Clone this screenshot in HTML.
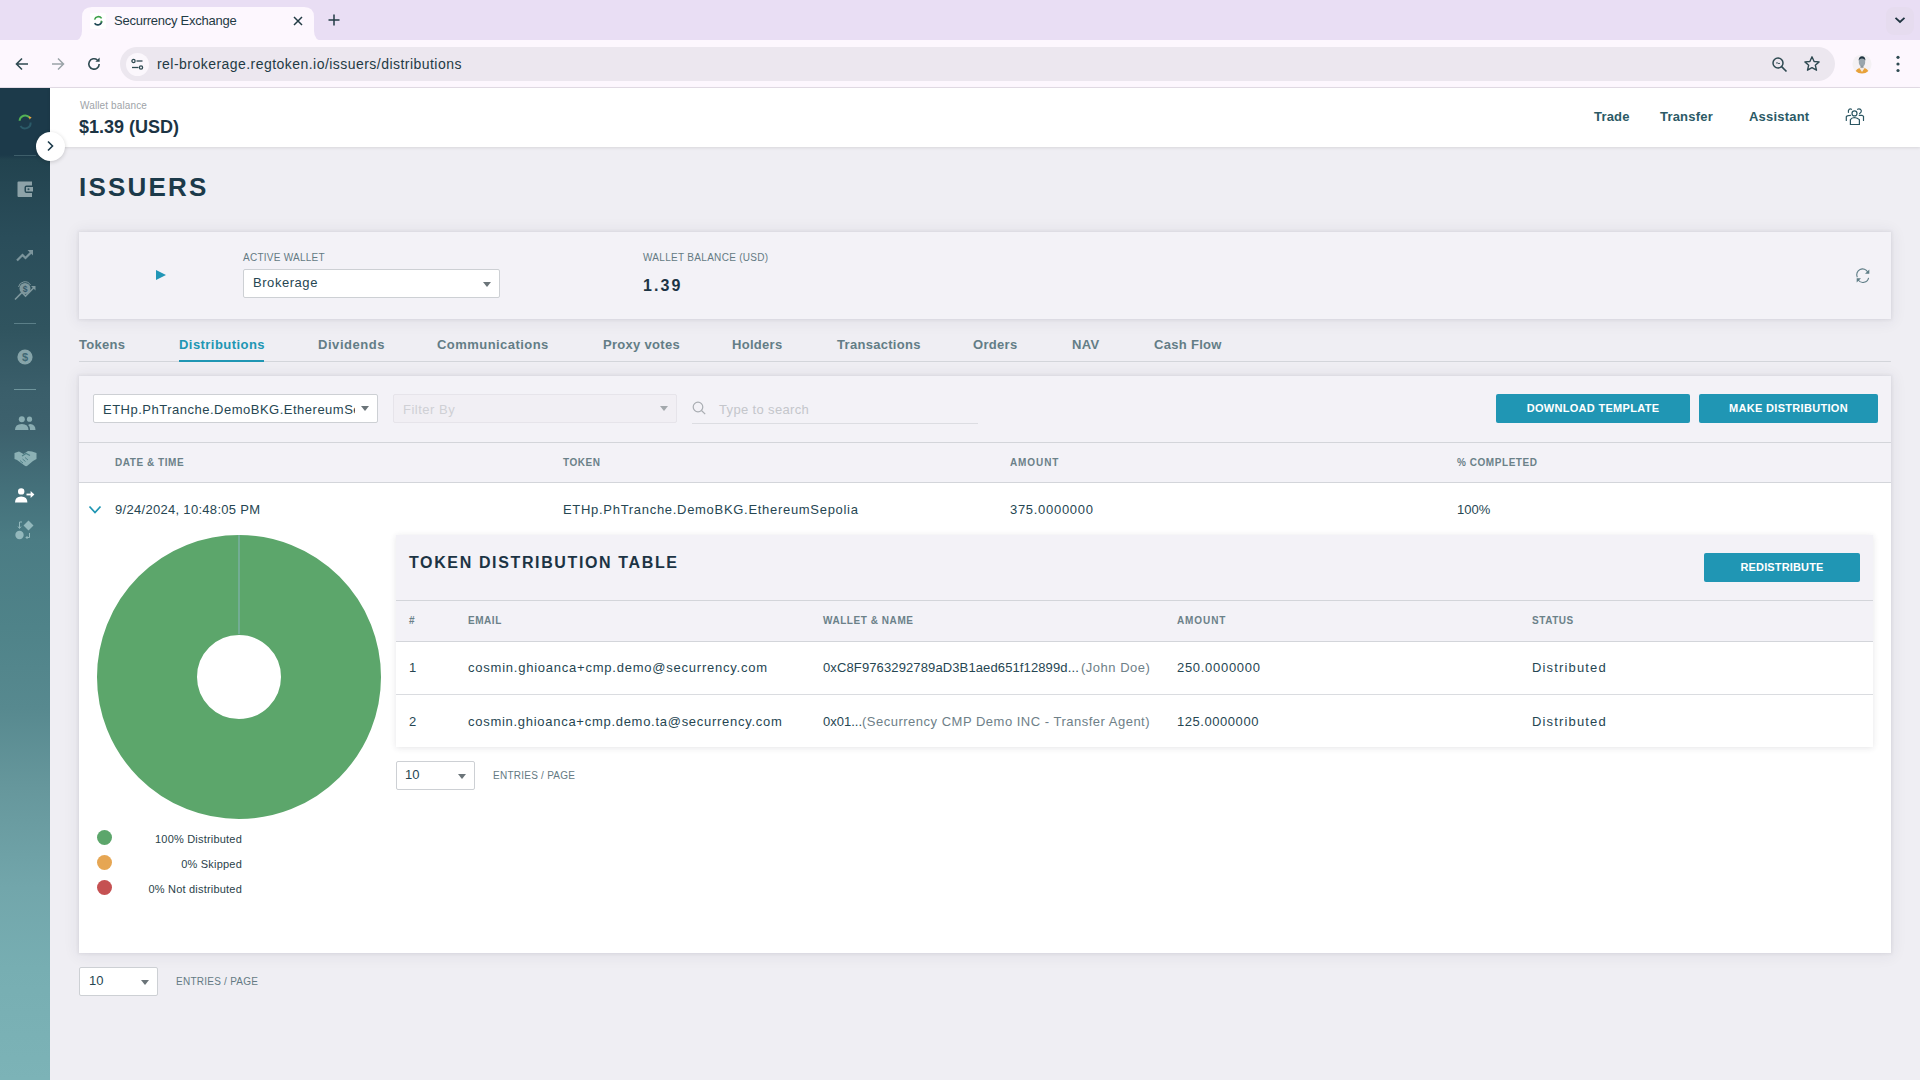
<!DOCTYPE html>
<html><head><meta charset="utf-8">
<style>
*{margin:0;padding:0;box-sizing:border-box}
html,body{width:1920px;height:1080px;overflow:hidden;font-family:"Liberation Sans",sans-serif;background:#efeef3;position:relative}
.a{position:absolute;white-space:nowrap}
svg.a{overflow:visible}
.chromet{color:#1f3a44;font-size:13px}
.navl{color:#2b5a66;font-size:13px;font-weight:bold;top:109px;letter-spacing:0.2px}
.card{background:#f3f2f7;box-shadow:0 0 3px 1px rgba(40,40,70,.07),0 1px 14px 2px rgba(40,40,70,.07)}
.lbl{color:#647a83;font-size:10px;letter-spacing:0.25px}
.tabs{top:337px;font-size:13px;font-weight:bold;color:#637d86;letter-spacing:0.3px}
.btn{background:#2096b4;color:#fff;font-size:11px;font-weight:bold;text-align:center;border-radius:2px;letter-spacing:0.3px}
.th{color:#6b8189;font-size:10px;font-weight:bold;letter-spacing:0.55px}
.td{color:#264652;font-size:13px;letter-spacing:0.7px}
.sel{background:#fff;border:1px solid #cdd0d4;border-radius:2px}
.caret{width:0;height:0;border-left:4px solid transparent;border-right:4px solid transparent;border-top:5px solid #6b7479}
.leg{color:#2a3f4a;font-size:11px;text-align:right;letter-spacing:0.2px}
.hl{height:1px;background:#d3d5da}
</style></head>
<body>
<!-- ============ CHROME ============ -->
<div class="a" style="left:0;top:0;width:1920px;height:41px;background:#e9def4"></div>
<svg class="a" style="left:72px;top:7px" width="252" height="34" viewBox="0 0 252 34"><path d="M0 34 Q10 34 10 24 L10 10 Q10 0 20 0 L232 0 Q242 0 242 10 L242 24 Q242 34 252 34 Z" fill="#fdf7fe"/></svg>
<div class="a" style="left:0;top:40px;width:1920px;height:47px;background:#fdf7fe"></div>
<div class="a" style="left:0;top:87px;width:1920px;height:1px;background:#e4dde7"></div>
<div class="a" style="left:120px;top:47px;width:1715px;height:34px;background:#ece7ef;border-radius:17px"></div>
<!-- favicon -->
<div class="a" style="left:90px;top:13px;width:16px;height:16px;background:#fff;border-radius:2px"></div>
<svg class="a" style="left:90px;top:13px" width="16" height="16" viewBox="0 0 16 16"><path d="M4.6 6.6 A3.9 3.9 0 0 1 11.6 5.4" fill="none" stroke="#3fa14a" stroke-width="1.6"/><path d="M11.7 8.2 A3.9 3.9 0 0 1 4.6 10.2" fill="none" stroke="#1f4a55" stroke-width="1.6"/><path d="M11 7 L12.6 9.3 L10.3 9.6Z" fill="#3fa14a"/></svg>
<div class="a chromet" style="left:114px;top:13px;letter-spacing:-0.25px">Securrency Exchange</div>
<svg class="a" style="left:292px;top:15px" width="12" height="12" viewBox="0 0 12 12"><path d="M2 2 L10 10 M10 2 L2 10" stroke="#223b44" stroke-width="1.5"/></svg>
<svg class="a" style="left:328px;top:14px" width="12" height="12" viewBox="0 0 12 12"><path d="M6 0.5 V11.5 M0.5 6 H11.5" stroke="#223b44" stroke-width="1.5"/></svg>
<div class="a" style="left:1886px;top:7px;width:28px;height:28px;background:#e6dcef;border-radius:8px"></div>
<svg class="a" style="left:1894px;top:16px" width="12" height="8" viewBox="0 0 12 8"><path d="M1.5 1.8 L6 6 L10.5 1.8" fill="none" stroke="#1f3440" stroke-width="1.8"/></svg>
<!-- nav -->
<svg class="a" style="left:14px;top:56px" width="16" height="16" viewBox="0 0 16 16"><path d="M14 8 H3 M8 2.5 L2.5 8 L8 13.5" fill="none" stroke="#2f4a52" stroke-width="1.6"/></svg>
<svg class="a" style="left:50px;top:56px" width="16" height="16" viewBox="0 0 16 16"><path d="M2 8 H13 M8 2.5 L13.5 8 L8 13.5" fill="none" stroke="#9aa3a8" stroke-width="1.5"/></svg>
<svg class="a" style="left:86px;top:56px" width="16" height="16" viewBox="0 0 16 16"><path d="M13.2 8 A5.2 5.2 0 1 1 11.4 4" fill="none" stroke="#2f4a52" stroke-width="1.6"/><path d="M13.6 1.6 V5.8 H9.4Z" fill="#2f4a52"/></svg>
<div class="a" style="left:126px;top:53px;width:23px;height:23px;border-radius:50%;background:#fbf7fc"></div>
<svg class="a" style="left:129px;top:56px" width="17" height="17" viewBox="0 0 17 17"><circle cx="4.5" cy="5" r="1.6" fill="none" stroke="#2f4a52" stroke-width="1.3"/><path d="M7.5 5 H13.5" stroke="#2f4a52" stroke-width="1.3"/><circle cx="12" cy="11.5" r="1.6" fill="none" stroke="#2f4a52" stroke-width="1.3"/><path d="M3 11.5 H9.5" stroke="#2f4a52" stroke-width="1.3"/></svg>
<div class="a chromet" style="left:157px;top:56px;font-size:14px;letter-spacing:0.46px">rel-brokerage.regtoken.io/issuers/distributions</div>
<svg class="a" style="left:1771px;top:56px" width="18" height="18" viewBox="0 0 18 18"><circle cx="7" cy="7" r="5" fill="none" stroke="#2f4a52" stroke-width="1.5"/><path d="M10.6 10.6 L15.5 15.5" stroke="#2f4a52" stroke-width="1.7"/><path d="M5 7.2 Q6 6.2 7 7.2 T9 7.2" fill="none" stroke="#2f4a52" stroke-width="0.9"/></svg>
<svg class="a" style="left:1803px;top:55px" width="18" height="18" viewBox="0 0 18 18"><path d="M9 1.8 L11.1 6.5 L16.1 6.9 L12.3 10.2 L13.5 15.2 L9 12.6 L4.5 15.2 L5.7 10.2 L1.9 6.9 L6.9 6.5Z" fill="none" stroke="#2f4a52" stroke-width="1.4" stroke-linejoin="round"/></svg>
<svg class="a" style="left:1852px;top:54px" width="20" height="20" viewBox="0 0 20 20"><defs><clipPath id="av"><circle cx="10" cy="10" r="9.6"/></clipPath></defs><circle cx="10" cy="10" r="9.6" fill="#f4f1f4"/><g clip-path="url(#av)"><path d="M2.5 20 Q4 13.5 10 13.5 Q16 13.5 17.5 20Z" fill="#e8a23a"/><path d="M7 13.5 L10 18 L13 13.5Z" fill="#f1e9e3"/><ellipse cx="10" cy="8" rx="3.2" ry="4.2" fill="#9aa6ad"/><path d="M6.5 6.5 Q7 2.2 10 2.2 Q13.2 2.2 13.5 6.5 Q12 4.5 10 4.6 Q8 4.5 6.5 6.5Z" fill="#1f3440"/><path d="M8.5 11.5 V13.8 H11.5 V11.5Z" fill="#8b969c"/></g></svg>
<svg class="a" style="left:1894px;top:54px" width="8" height="20" viewBox="0 0 8 20"><circle cx="4" cy="3.3" r="1.6" fill="#2f4a52"/><circle cx="4" cy="10" r="1.6" fill="#2f4a52"/><circle cx="4" cy="16.5" r="1.6" fill="#2f4a52"/></svg>

<!-- ============ SIDEBAR ============ -->
<div class="a" style="left:0;top:88px;width:50px;height:992px;background:linear-gradient(180deg,#1c3a4a 0px,#1c3a4a 67px,#22434f 72px,#2a4d5a 150px,#30545f 240px,#3a5e6a 300px,#3d616d 340px,#44707a 400px,#4b7c84 452px,#4f8389 540px,#57898f 620px,#66979c 700px,#72a6ab 800px,#77aeb2 880px,#7cb3b7 992px)"></div>
<div class="a" style="left:14px;top:155px;width:22px;height:1px;background:#3e5e6a"></div>
<div class="a" style="left:14px;top:323px;width:22px;height:1px;background:#5b7f88"></div>
<div class="a" style="left:14px;top:389px;width:22px;height:1px;background:#6f959c"></div>
<!-- logo -->
<svg class="a" style="left:16px;top:113px" width="18" height="18" viewBox="0 0 18 18"><path d="M3.6 7.8 A5.6 5.6 0 0 1 13.6 4.6" fill="none" stroke="#53b255" stroke-width="2"/><path d="M12.6 3.2 L15.6 4.2 L13.6 6.6Z" fill="#e8a33c"/><path d="M14.6 9.5 A5.6 5.6 0 0 1 4.4 13" fill="none" stroke="#2b5a68" stroke-width="2"/></svg>
<!-- wallet -->
<svg class="a" style="left:17px;top:181px" width="17" height="17" viewBox="0 0 17 17"><path d="M1.5 0.5 H15 V4.5 H9.5 Q7.5 4.5 7.5 6.5 V10 Q7.5 12 9.5 12 H15 V16 H1.5 Q0.5 16 0.5 15 V1.5 Q0.5 0.5 1.5 0.5Z" fill="#8da2a8"/><rect x="9" y="6" width="7" height="4.5" fill="#8da2a8"/><circle cx="11.5" cy="8.2" r="1" fill="#2b4e5b"/></svg>
<!-- trend -->
<svg class="a" style="left:16px;top:249px" width="18" height="13" viewBox="0 0 18 13"><path d="M1 11.5 L6.5 6 L9.5 9 L16 2.5" fill="none" stroke="#7c959c" stroke-width="2.2"/><path d="M11.5 1 H17 V6.5Z" fill="#7c959c"/></svg>
<!-- dollar arrow -->
<svg class="a" style="left:14px;top:281px" width="23" height="20" viewBox="0 0 23 20"><circle cx="11" cy="7.5" r="5.5" fill="#7f989e"/><text x="11" y="10.6" font-size="8.5" font-weight="bold" text-anchor="middle" fill="#36596a" font-family="Liberation Sans">$</text><path d="M1 18.5 L8 11.5 L11.5 15 L20 6.5" fill="none" stroke="#7f989e" stroke-width="1.6"/><path d="M17 5 H21.5 V9.5Z" fill="#7f989e"/><path d="M4.5 6 A6.5 6.5 0 0 1 16.5 4" fill="none" stroke="#7f989e" stroke-width="1"/></svg>
<!-- coin -->
<svg class="a" style="left:17px;top:349px" width="16" height="16" viewBox="0 0 16 16"><circle cx="8" cy="8" r="7.6" fill="#86a4a9"/><text x="8" y="12" font-size="11" font-weight="bold" text-anchor="middle" fill="#406874" font-family="Liberation Sans">$</text></svg>
<!-- people -->
<svg class="a" style="left:15px;top:416px" width="21" height="15" viewBox="0 0 21 15"><circle cx="6.8" cy="3.2" r="3" fill="#8aadb2"/><path d="M0 14 Q0 8 6.8 8 Q13.5 8 13.5 14Z" fill="#8aadb2"/><circle cx="14.5" cy="3.2" r="2.6" fill="#8aadb2"/><path d="M15 8 Q20.5 8.5 20.5 14 H15 Q15 10 13 9Z" fill="#8aadb2"/></svg>
<!-- handshake -->
<svg class="a" style="left:14px;top:450px" width="23" height="17" viewBox="0 0 23 17"><path d="M0.5 3 L5 1.5 L9.5 4 L14 1 L18 1.5 L22.5 3 V9 L19 11 L13 16 Q11.5 16.5 10.5 15.5 L3 10 L0.5 9Z" fill="#8cb1b5"/><path d="M8 6 L12 3.5 L16 5.5" fill="none" stroke="#4d7d84" stroke-width="1.1"/><path d="M6 10.5 L9 13 M8.5 9 L11.5 11.5 M11 7.5 L14 10" stroke="#4d7d84" stroke-width="0.9"/></svg>
<!-- person arrow (active) -->
<svg class="a" style="left:15px;top:488px" width="20" height="15" viewBox="0 0 20 15"><circle cx="6.2" cy="3.4" r="3.2" fill="#fff"/><path d="M0 14.5 Q0 8.5 6.2 8.5 Q12.4 8.5 12.4 14.5Z" fill="#fff"/><path d="M11.5 6.5 H17" stroke="#fff" stroke-width="1.8"/><path d="M15.6 3 L19.4 6.5 L15.6 10Z" fill="#fff"/></svg>
<!-- last icon -->
<svg class="a" style="left:15px;top:520px" width="19" height="20" viewBox="0 0 19 20"><circle cx="4.5" cy="15" r="4.2" fill="#93b8bc"/><path d="M13.5 0.5 L18.5 5.5 L13.5 10.5 L8.5 5.5Z" fill="#93b8bc"/><path d="M4.5 2 H7 M4.5 2 V8 M3 6.5 L4.5 8.5 L6 6.5" fill="none" stroke="#93b8bc" stroke-width="1"/><path d="M14.5 13 V17.5 H11 M12.5 16 L11 17.5 L12.5 19" fill="none" stroke="#93b8bc" stroke-width="1"/></svg>

<!-- ============ HEADER ============ -->
<div class="a" style="left:50px;top:88px;width:1870px;height:59px;background:#fff;box-shadow:0 1px 3px rgba(0,0,0,.10)"></div>
<div class="a" style="left:80px;top:100px;font-size:10px;color:#9ea3a8;letter-spacing:0.13px">Wallet balance</div>
<div class="a" style="left:79px;top:117px;font-size:18px;font-weight:bold;color:#1c3444">$1.39 (USD)</div>
<div class="a navl" style="left:1594px">Trade</div>
<div class="a navl" style="left:1660px">Transfer</div>
<div class="a navl" style="left:1749px">Assistant</div>
<svg class="a" style="left:1840px;top:100px" width="35" height="32" viewBox="0 0 35 32"><g fill="none" stroke="#2b5662" stroke-width="1.2" stroke-linecap="round"><circle cx="14.5" cy="13.4" r="2.5"/><path d="M10.4 24.5 V19.6 Q11.5 17.8 14.5 17.5 Q17.5 17.8 19.4 19.6 V24.5 Z"/><path d="M11.5 9.3 Q10.2 8.6 9.3 9.2 Q8 10.3 8.4 12.3 M6.3 20.5 V16.7 Q6.8 15.3 10.6 15.3"/><path d="M17.6 9.3 Q19 8.6 20.6 9.4 Q21.9 10.6 21 12.2 L19.6 13.6 M19.2 15.3 H22 L23.5 16.3 V20.5"/></g></svg>

<!-- expand btn -->
<div class="a" style="left:36px;top:132px;width:29px;height:29px;border-radius:50%;background:#fff;box-shadow:0 1px 4px rgba(0,0,0,.18)"></div>
<svg class="a" style="left:45px;top:140px" width="10" height="12" viewBox="0 0 10 12"><path d="M3 1.5 L7.5 6 L3 10.5" fill="none" stroke="#1c3a4a" stroke-width="1.6"/></svg>
<!-- ============ MAIN ============ -->
<div class="a" style="left:79px;top:172px;font-size:26px;font-weight:bold;color:#1c3a4a;letter-spacing:2.2px">ISSUERS</div>

<div class="a card" style="left:79px;top:232px;width:1812px;height:87px"></div>
<svg class="a" style="left:155px;top:269px" width="12" height="12" viewBox="0 0 12 12"><path d="M1 1 L11 6 L1 11Z" fill="#2196b6"/></svg>
<div class="a lbl" style="left:243px;top:252px">ACTIVE WALLET</div>
<div class="a sel" style="left:243px;top:269px;width:257px;height:29px"></div>
<div class="a td" style="left:253px;top:275px;letter-spacing:0.55px">Brokerage</div>
<div class="a caret" style="left:483px;top:282px"></div>
<div class="a lbl" style="left:643px;top:252px;letter-spacing:0.3px">WALLET BALANCE (USD)</div>
<div class="a" style="left:643px;top:277px;font-size:16px;font-weight:bold;color:#1c3444;letter-spacing:2.1px">1.39</div>
<svg class="a" style="left:1855px;top:268px" width="16" height="16" viewBox="0 0 16 16"><path d="M2.3 9.2 A5.8 5.8 0 0 1 12.8 4.2" fill="none" stroke="#5e7d86" stroke-width="1.1"/><path d="M13.6 9.8 A5.8 5.8 0 0 1 3.2 12" fill="none" stroke="#5e7d86" stroke-width="1.1"/><path d="M14.3 1.5 V5.8 H10Z" fill="#5e7d86"/><path d="M1.7 14.5 V10.2 H6Z" fill="#5e7d86"/></svg>

<div class="a tabs" style="left:79px">Tokens</div>
<div class="a tabs" style="left:179px;color:#2096b3;letter-spacing:0.45px">Distributions</div>
<div class="a tabs" style="left:318px;letter-spacing:0.55px">Dividends</div>
<div class="a tabs" style="left:437px;letter-spacing:0.45px">Communications</div>
<div class="a tabs" style="left:603px">Proxy votes</div>
<div class="a tabs" style="left:732px">Holders</div>
<div class="a tabs" style="left:837px">Transactions</div>
<div class="a tabs" style="left:973px">Orders</div>
<div class="a tabs" style="left:1072px">NAV</div>
<div class="a tabs" style="left:1154px">Cash Flow</div>
<div class="a hl" style="left:79px;top:361px;width:1812px"></div>
<div class="a" style="left:179px;top:360px;width:85px;height:2px;background:#2096b3"></div>

<!-- big card -->
<div class="a card" style="left:79px;top:376px;width:1812px;height:577px;background:#fff"></div>
<div class="a" style="left:79px;top:376px;width:1812px;height:106px;background:#f3f2f7"></div>
<div class="a hl" style="left:79px;top:442px;width:1812px"></div>
<div class="a hl" style="left:79px;top:482px;width:1812px"></div>

<div class="a sel" style="left:93px;top:394px;width:285px;height:29px"></div>
<div class="a td" style="left:103px;top:402px;width:252px;overflow:hidden;letter-spacing:0.5px">ETHp.PhTranche.DemoBKG.EthereumSepolia</div>
<div class="a caret" style="left:361px;top:406px"></div>
<div class="a" style="left:393px;top:394px;width:284px;height:29px;background:#f1eff4;border:1px solid #e6e4ea;border-radius:2px"></div>
<div class="a td" style="left:403px;top:402px;color:#cfd0d5;letter-spacing:0.5px">Filter By</div>
<div class="a caret" style="left:660px;top:406px;border-top-color:#a3a8ac"></div>
<svg class="a" style="left:692px;top:401px" width="15" height="15" viewBox="0 0 15 15"><circle cx="6" cy="6" r="4.8" fill="none" stroke="#a9adb2" stroke-width="1.2"/><line x1="9.5" y1="9.5" x2="13.2" y2="13.2" stroke="#a9adb2" stroke-width="1.2"/></svg>
<div class="a td" style="left:719px;top:402px;color:#c4c6cb;letter-spacing:0.35px">Type to search</div>
<div class="a" style="left:692px;top:423px;width:286px;height:1px;background:#dcdde2"></div>

<div class="a btn" style="left:1496px;top:394px;width:194px;height:29px;line-height:29px">DOWNLOAD TEMPLATE</div>
<div class="a btn" style="left:1699px;top:394px;width:179px;height:29px;line-height:29px">MAKE DISTRIBUTION</div>

<div class="a th" style="left:115px;top:457px">DATE &amp; TIME</div>
<div class="a th" style="left:563px;top:457px">TOKEN</div>
<div class="a th" style="left:1010px;top:457px;letter-spacing:0.9px">AMOUNT</div>
<div class="a th" style="left:1457px;top:457px">% COMPLETED</div>

<svg class="a" style="left:88px;top:504px" width="14" height="12" viewBox="0 0 14 12"><polyline points="1.5,2.5 7,8.5 12.5,2.5" fill="none" stroke="#2096b3" stroke-width="1.7"/></svg>
<div class="a td" style="left:115px;top:502px;letter-spacing:0.3px">9/24/2024, 10:48:05 PM</div>
<div class="a td" style="left:563px;top:502px">ETHp.PhTranche.DemoBKG.EthereumSepolia</div>
<div class="a td" style="left:1010px;top:502px">375.0000000</div>
<div class="a td" style="left:1457px;top:502px;letter-spacing:0">100%</div>

<!-- donut -->
<svg class="a" style="left:96px;top:534px" width="286" height="286" viewBox="0 0 286 286"><circle cx="143" cy="143" r="92" fill="none" stroke="#5ca66b" stroke-width="100"/><line x1="143" y1="1" x2="143" y2="100" stroke="#8fb5c6" stroke-width="0.9"/></svg>
<div class="a" style="left:97px;top:829.5px;width:15px;height:15px;border-radius:50%;background:#5ca66b"></div>
<div class="a" style="left:97px;top:854.5px;width:15px;height:15px;border-radius:50%;background:#e6a653"></div>
<div class="a" style="left:97px;top:879.5px;width:15px;height:15px;border-radius:50%;background:#c55152"></div>
<div class="a leg" style="left:92px;top:832.5px;width:150px">100% Distributed</div>
<div class="a leg" style="left:92px;top:857.5px;width:150px">0% Skipped</div>
<div class="a leg" style="left:92px;top:882.5px;width:150px">0% Not distributed</div>

<!-- inner card -->
<div class="a" style="left:396px;top:535px;width:1477px;height:212px;background:#fff;box-shadow:0 1px 6px rgba(40,40,60,.12)"></div>
<div class="a" style="left:396px;top:535px;width:1477px;height:106px;background:#f3f2f7"></div>
<div class="a hl" style="left:396px;top:600px;width:1477px"></div>
<div class="a hl" style="left:396px;top:641px;width:1477px"></div>
<div class="a hl" style="left:396px;top:694px;width:1477px;background:#dadce0"></div>
<div class="a" style="left:409px;top:554px;font-size:16px;font-weight:bold;color:#1c3444;letter-spacing:1.63px">TOKEN DISTRIBUTION TABLE</div>
<div class="a btn" style="left:1704px;top:553px;width:156px;height:29px;line-height:29px;letter-spacing:0.15px">REDISTRIBUTE</div>
<div class="a th" style="left:409px;top:615px">#</div>
<div class="a th" style="left:468px;top:615px">EMAIL</div>
<div class="a th" style="left:823px;top:615px">WALLET &amp; NAME</div>
<div class="a th" style="left:1177px;top:615px;letter-spacing:0.9px">AMOUNT</div>
<div class="a th" style="left:1532px;top:615px">STATUS</div>
<div class="a td" style="left:409px;top:660px">1</div>
<div class="a td" style="left:468px;top:660px;letter-spacing:0.77px">cosmin.ghioanca+cmp.demo@securrency.com</div>
<div class="a td" style="left:823px;top:660px;letter-spacing:0.12px">0xC8F9763292789aD3B1aed651f12899d...</div>
<div class="a td" style="left:1081px;top:660px;color:#6e8088;letter-spacing:0.5px">(John Doe)</div>
<div class="a td" style="left:1177px;top:660px">250.0000000</div>
<div class="a td" style="left:1532px;top:660px;letter-spacing:1.15px">Distributed</div>
<div class="a td" style="left:409px;top:714px">2</div>
<div class="a td" style="left:468px;top:714px;letter-spacing:0.72px">cosmin.ghioanca+cmp.demo.ta@securrency.com</div>
<div class="a td" style="left:823px;top:714px;letter-spacing:0">0x01...</div>
<div class="a td" style="left:862px;top:714px;color:#6e8088;letter-spacing:0.5px">(Securrency CMP Demo INC - Transfer Agent)</div>
<div class="a td" style="left:1177px;top:714px;letter-spacing:0.55px">125.0000000</div>
<div class="a td" style="left:1532px;top:714px;letter-spacing:1.15px">Distributed</div>

<div class="a sel" style="left:396px;top:761px;width:79px;height:29px"></div>
<div class="a td" style="left:405px;top:767px;letter-spacing:0">10</div>
<div class="a caret" style="left:458px;top:774px"></div>
<div class="a lbl" style="left:493px;top:770px">ENTRIES / PAGE</div>

<div class="a sel" style="left:79px;top:967px;width:79px;height:29px"></div>
<div class="a td" style="left:89px;top:973px;letter-spacing:0">10</div>
<div class="a caret" style="left:141px;top:980px"></div>
<div class="a lbl" style="left:176px;top:976px">ENTRIES / PAGE</div>
</body></html>
